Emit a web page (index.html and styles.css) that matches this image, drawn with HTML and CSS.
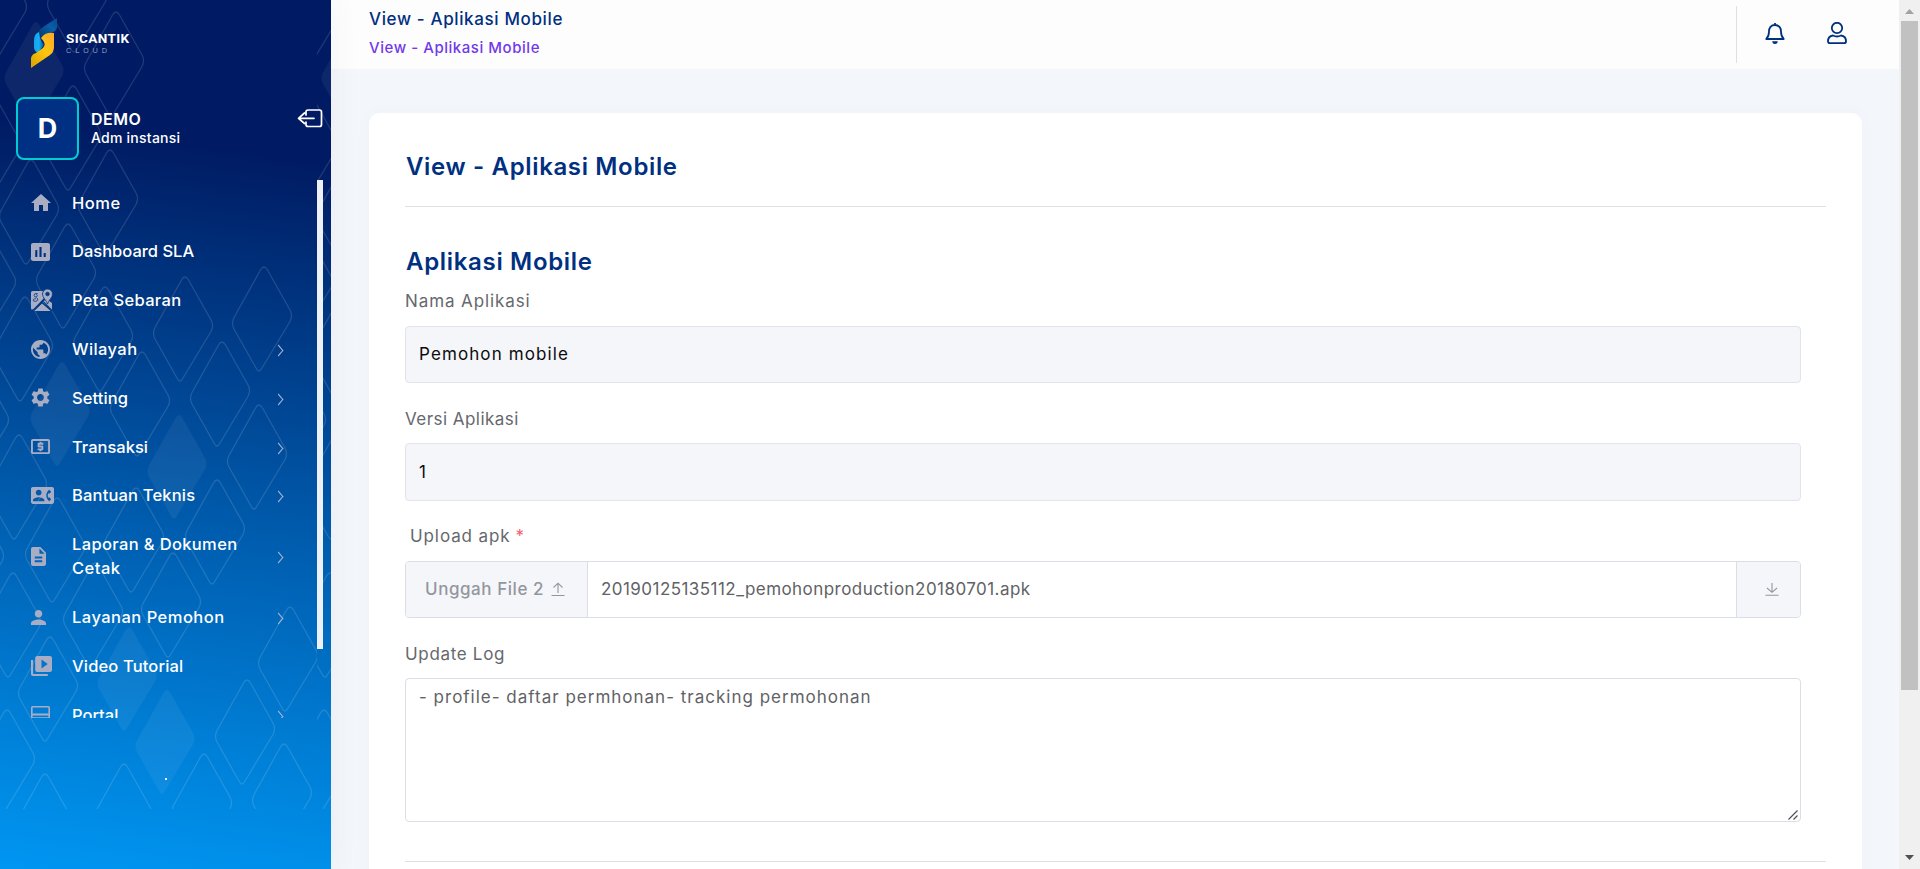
FILE: index.html
```html
<!DOCTYPE html>
<html lang="id">
<head>
<meta charset="utf-8">
<title>View - Aplikasi Mobile</title>
<link rel="stylesheet" href="styles.css">
</head>
<body>
<div class="app">
  <aside class="sidebar">
    <svg class="pattern" width="331" height="809" viewBox="0 0 331 809">
      <defs>
        <path id="d" d="M-1.500 -49Q2 -55 5.500 -49L28 -9Q31 -3.500 28 2.500L0 49Q-3 55 -6 49L-28 10Q-31 4 -28 -1.500Z"/>
        <g id="tile">
          <g class="outline">
            <use href="#d" x="-3" y="10"/><use href="#d" x="77" y="0"/><use href="#d" x="114" y="64"/>
            <use href="#d" x="71" y="138"/><use href="#d" x="-9" y="148"/><use href="#d" x="108" y="202"/>
            <use href="#d" x="29" y="212"/><use href="#d" x="66" y="276"/><use href="#d" x="-14" y="285"/>
            <use href="#d" x="262" y="319"/><use href="#d" x="183" y="329"/><use href="#d" x="103" y="339"/>
            <use href="#d" x="23" y="349"/><use href="#d" x="220" y="394"/><use href="#d" x="140" y="404"/>
            <use href="#d" x="-21" y="423"/><use href="#d" x="257" y="457"/><use href="#d" x="17" y="487"/>
            <use href="#d" x="215" y="532"/><use href="#d" x="134" y="540"/><use href="#d" x="55" y="550"/>
            <use href="#d" x="-26" y="559"/><use href="#d" x="171" y="605"/><use href="#d" x="93" y="615"/>
            <use href="#d" x="11" y="625"/><use href="#d" x="288" y="659"/><use href="#d" x="48" y="689"/>
            <use href="#d" x="245" y="732"/><use href="#d" x="5" y="762"/><use href="#d" x="282" y="796"/>
            <use href="#d" x="202" y="806"/><use href="#d" x="122" y="816"/><use href="#d" x="43" y="826"/>
          </g>
          <g class="solid">
            <use href="#d" x="34" y="74"/><use href="#d" x="60" y="414"/><use href="#d" x="177" y="467"/>
            <use href="#d" x="127" y="679"/><use href="#d" x="165" y="742"/>
          </g>
        </g>
        <clipPath id="c1"><path d="M0 0h317v809H0z"/></clipPath>
        <clipPath id="c2"><path d="M317 0h14v809h-14z"/></clipPath>
      </defs>
      <g clip-path="url(#c1)"><use href="#tile"/></g>
      <g clip-path="url(#c2)"><use href="#tile" x="317"/></g>
    </svg>

    <div class="brand">
      <svg width="28" height="50" viewBox="0 0 28 50">
        <defs>
          <linearGradient id="g1" x1="0" y1="1" x2="1" y2="0"><stop offset="0" stop-color="#04396f"/><stop offset=".6" stop-color="#0a5ea8"/><stop offset="1" stop-color="#034a8c"/></linearGradient>
          <linearGradient id="g2"><stop offset="0" stop-color="#12a5ee"/><stop offset=".5" stop-color="#18aef5"/><stop offset="1" stop-color="#064d8c"/></linearGradient>
          <linearGradient id="g3" x1="1" y1="0" x2="0" y2="1"><stop offset="0" stop-color="#fba52c"/><stop offset=".45" stop-color="#fcc70f"/><stop offset="1" stop-color="#dca200"/></linearGradient>
        </defs>
        <path d="M27 0v10Q26 14 20 15L9 19Q6 14 13 9Z" fill="url(#g1)"/>
        <path d="M9 14Q4 16 4 22v7Q4 33 8 35L14 27Q10 23 9 14Z" fill="url(#g2)"/>
        <path d="M11 20Q15 14 24 15V29Q24 34 20 37L1 50V40Q2 36 6 35L13 30Q17 26 11 20Z" fill="url(#g3)"/>
      </svg>
      <div class="brand-text"><div class="brand-name">SICANTIK</div><div class="brand-sub">CLOUD</div></div>
    </div>

    <div class="profile">
      <div class="avatar">D</div>
      <div class="who"><div class="who-name">DEMO</div><div class="who-role">Adm instansi</div></div>
      <svg class="logout" width="26" height="20" viewBox="0 0 26 20"><path d="M9 6V3Q9 1 11 1H22.500Q24.500 1 24.500 3V15.500Q24.500 17.500 22.500 17.500H11Q9 17.500 9 15.500V13M17 9.300H2M7.500 4L1.500 9.300L7.500 14.500"/></svg>
    </div>

    <div class="nav-wrap">
      <nav class="nav">
        <div class="item home"><svg width="20" height="17" viewBox="2 3 20 17"><path d="M10 20v-6h4v6h5v-8h3L12 3 2 12h3v8z"/></svg><span>Home</span></div>
        <div class="item dash"><svg width="19" height="18" viewBox="3 3 18 18" preserveAspectRatio="none"><path d="M19 3H5c-1.100 0-2 .9-2 2v14c0 1.100.9 2 2 2h14c1.100 0 2-.9 2-2V5c0-1.100-.9-2-2-2zM9 17H7v-7h2v7zm4 0h-2V7h2v10zm4 0h-2v-4h2v4z"/></svg><span>Dashboard SLA</span></div>
        <div class="item peta"><svg width="22" height="22" viewBox="0 0 22 22"><path fill-rule="evenodd" d="M1.500 2H12Q11 5.500 13 9L3.500 19Q0 22 0 19V3.500Q0 2 1.500 2Z"/><path d="M12 13L20 21.500Q19 22 18 22H4Q3 22 2.500 21.500L10.500 14.500Z"/><path d="M12.500 12L16 10.500L21 14V19Q21 20.500 20.500 20Z"/><path class="cut" d="M11 13.500L0 24M11 13.500L22 23"/><path class="halo" fill-rule="evenodd" d="M16.500 0a5 5 0 0 1 5 5c0 4-4 6-5 10c-1-4-5-6-5-10a5 5 0 0 1 5-5zm0 3.200a1.800 1.800 0 1 0 0 3.600a1.800 1.800 0 1 0 0-3.600z"/><path class="thin" d="M6.500 4.500Q3 4 3 6.500Q3.500 8.500 5.500 8Q7 6.500 5.500 5M5.500 8.500Q7.500 10 6.500 11.500Q5 13 2.500 12Q1.500 9.500 5 9.800"/></svg><span>Peta Sebaran</span></div>
        <div class="item wil"><svg width="19" height="19" viewBox="2 2 20 20"><path d="M12 2C6.480 2 2 6.480 2 12s4.480 10 10 10 10-4.480 10-10S17.520 2 12 2zm-1 17.930c-3.950-.49-7-3.850-7-7.930 0-.62.080-1.210.210-1.790L9 15v1c0 1.100.9 2 2 2v1.930zm6.900-2.540c-.26-.81-1-1.390-1.900-1.390h-1v-3c0-.55-.45-1-1-1H8v-2h2c.55 0 1-.45 1-1V7h2c1.100 0 2-.9 2-2v-.41c2.930 1.190 5 4.060 5 7.410 0 2.080-.8 3.970-2.100 5.390z"/></svg><span>Wilayah</span><i class="chev"></i></div>
        <div class="item set"><svg width="19" height="19" viewBox="2.200 2 19.600 20"><path d="M19.140 12.940c.04-.3.060-.61.060-.94 0-.32-.02-.64-.07-.94l2.030-1.580c.18-.14.23-.41.12-.61l-1.920-3.320c-.12-.22-.37-.29-.59-.22l-2.390.96c-.5-.38-1.030-.7-1.620-.94l-.36-2.540c-.04-.24-.24-.41-.48-.41h-3.840c-.24 0-.43.17-.47.41l-.36 2.540c-.59.24-1.130.57-1.620.94l-2.390-.96c-.22-.08-.47 0-.59.22L2.740 8.870c-.12.210-.08.470.12.610l2.030 1.580c-.05.3-.09.63-.09.94s.02.640.070.940l-2.030 1.580c-.18.140-.23.410-.12.610l1.920 3.320c.12.220.37.290.59.220l2.390-.96c.5.380 1.030.7 1.620.94l.36 2.540c.05.240.24.410.48.410h3.840c.24 0 .44-.17.47-.41l.36-2.540c.59-.24 1.130-.56 1.620-.94l2.390.96c.22.080.47 0 .59-.22l1.920-3.320c.12-.22.070-.47-.12-.61l-2.010-1.580zM12 15.600c-1.980 0-3.600-1.620-3.600-3.600s1.620-3.600 3.600-3.600 3.600 1.620 3.600 3.600-1.620 3.600-3.600 3.600z"/></svg><span>Setting</span><i class="chev"></i></div>
        <div class="item trans"><svg width="19" height="15" viewBox="2 4 20 16" preserveAspectRatio="none"><path d="M11 17h2v-1h1c.55 0 1-.45 1-1v-3c0-.55-.45-1-1-1h-3v-1h4V8h-2V7h-2v1h-1c-.55 0-1 .45-1 1v3c0 .55.45 1 1 1h3v1H9v2h2v1zm9-13H4c-1.110 0-1.990.89-1.990 2L2 18c0 1.110.89 2 2 2h16c1.110 0 2-.89 2-2V6c0-1.110-.89-2-2-2zm0 14H4V6h16v12z"/></svg><span>Transaksi</span><i class="chev"></i></div>
        <div class="item bant"><svg width="23" height="17" viewBox="0 3 24 18" preserveAspectRatio="none"><path d="M22 3H2C.9 3 0 3.900 0 5v14c0 1.100.9 2 2 2h20c1.100 0 1.990-.9 1.990-2L24 5c0-1.100-.9-2-2-2zM8 6c1.660 0 3 1.340 3 3s-1.340 3-3 3-3-1.340-3-3 1.340-3 3-3zm6 12H2v-1c0-2 4-3.100 6-3.100s6 1.100 6 3.100v1zm3.850-4h1.640L21 16l-1.990 1.990c-1.310-.98-2.280-2.380-2.730-3.990-.18-.64-.28-1.310-.28-2s.1-1.360.28-2c.45-1.620 1.420-3.010 2.730-3.990L21 8l-1.510 2h-1.640c-.22.630-.35 1.300-.35 2s.13 1.370.35 2z"/></svg><span>Bantuan Teknis</span><i class="chev"></i></div>
        <div class="item lap"><svg width="15" height="19" viewBox="4 2 16 20" preserveAspectRatio="none"><path d="M14 2H6c-1.100 0-1.990.9-1.990 2L4 20c0 1.100.89 2 1.990 2H18c1.100 0 2-.9 2-2V8l-6-6zm2 16H8v-2h8v2zm0-4H8v-2h8v2zm-3-5V3.500L18.500 9H13z"/></svg><span>Laporan &amp; Dokumen<br><b>Cetak</b></span><i class="chev"></i></div>
        <div class="item lay"><svg width="15" height="15" viewBox="4 4 16 16"><path d="M12 12c2.210 0 4-1.790 4-4s-1.790-4-4-4-4 1.790-4 4 1.790 4 4 4zm0 2c-2.670 0-8 1.340-8 4v2h16v-2c0-2.660-5.330-4-8-4z"/></svg><span>Layanan Pemohon</span><i class="chev"></i></div>
        <div class="item vid"><svg width="21" height="20" viewBox="2 2 20 20" preserveAspectRatio="none"><path d="M4 6H2v14c0 1.100.9 2 2 2h14v-2H4V6zm16-4H8c-1.100 0-2 .9-2 2v12c0 1.100.9 2 2 2h12c1.100 0 2-.9 2-2V4c0-1.100-.9-2-2-2zm-8 12.500v-9l6 4.500-6 4.500z"/></svg><span>Video Tutorial</span></div>
        <div class="item port"><svg width="19" height="15" viewBox="0 0 19 15"><path fill-rule="evenodd" d="M1.500 0H17.500Q19 0 19 1.500V13.500Q19 15 17.500 15H1.500Q0 15 0 13.500V1.500Q0 0 1.500 0ZM1.600 1.600V7.500H17.400V1.600ZM1.600 9.600V11.200H17.400V9.600Z"/></svg><span>Portal</span><i class="chev"></i></div>
      </nav>
      <div class="nav-thumb"></div>
    </div>
    <div class="foot"><i class="dot"></i></div>
  </aside>

  <main class="main">
    <header class="topbar">
      <div class="crumbs"><div class="page">View - Aplikasi Mobile</div><div class="sub">View - Aplikasi Mobile</div></div>
      <div class="tools">
        <svg width="20" height="23" viewBox="0 0 20 23"><path d="M10 1V3M10 3C6 3 4 6 4 9.500C4 13 3.300 15 1.300 17H18.700C16.700 15 16 13 16 9.500C16 6 14 3 10 3Z"/><path class="fill" d="M7.300 19.300h5.400a2.700 2.700 0 0 1-5.400 0z"/></svg>
        <svg width="20" height="23" viewBox="0 0 20 23"><circle cx="10" cy="6" r="5.200"/><path d="M6 13.500Q10 15.500 14 13.500Q19 14 19 19.500Q19 21.200 17 21.200H3Q1 21.200 1 19.500Q1 14 6 13.500Z"/></svg>
      </div>
    </header>
    <section class="card">
      <h1 class="title">View - Aplikasi Mobile</h1>
      <div class="form">
        <h2 class="group">Aplikasi Mobile</h2>
        <label class="label l-nama">Nama Aplikasi</label>
        <div class="input f-nama">Pemohon mobile</div>
        <label class="label l-versi">Versi Aplikasi</label>
        <div class="input f-versi">1</div>
        <label class="label l-upload">Upload apk<span class="req">*</span></label>
        <div class="upload">
          <div class="pick"><span>Unggah File 2</span><svg width="14" height="15" viewBox="0 0 14 15"><path d="M7 11V1.500M2.500 5.500L7 1.200L11.500 5.500M.5 13.500H13.500"/></svg></div>
          <div class="file">20190125135112_pemohonproduction20180701.apk</div>
          <div class="get"><svg width="14" height="15" viewBox="0 0 14 15"><path d="M7 1V10M2 6L7 10.300L12 6M.5 13.300H13.500"/></svg></div>
        </div>
        <label class="label l-log">Update Log</label>
        <div class="area"><span>- profile- daftar permhonan- tracking permohonan</span><svg width="10" height="10" viewBox="0 0 10 10"><path d="M.5 9.500L9.500 .5M5.500 9.500L9.500 5.500"/></svg></div>
      </div>
    </section>
  </main>

  <div class="scroll">
    <svg width="9" height="5" viewBox="0 0 9 5"><path fill="#a3a3a3" d="M4.500 0L9 5H0z"/></svg>
    <div class="thumb"></div>
    <svg class="down" width="9" height="5" viewBox="0 0 9 5"><path fill="#505050" d="M0 0H9L4.500 5z"/></svg>
  </div>
</div>
</body>
</html>
```
FILE: styles.css
```css
* { box-sizing: border-box; }
body { margin: 0; overflow: hidden; font-family: Inter, sans-serif; }
svg, i { display: block; flex: none; }
.app { display: flex; height: 869px; overflow: hidden; background: #f3f6fa; }

.sidebar {
  position: relative; flex: none; width: 331px; display: flex; flex-direction: column; color: #fff; z-index: 1;
  background: linear-gradient(188deg, #001b63 0%, #001b63 18%, #002d77 29%, #0058a9 57%, #007dd4 82%, #0096f2 100%);
  box-shadow: 0 0 28px rgba(82, 63, 105, .06);
}
.pattern { position: absolute; left: 0; top: 0; }
.outline { fill: none; stroke: #fff; stroke-opacity: .13; stroke-width: 1.3; }
.solid { fill: #fff; fill-opacity: .055; }

.brand { position: relative; display: flex; gap: 8px; height: 97px; padding: 18px 0 0 30px; }
.brand-text { padding-top: 12px; }
.brand-name { font: 700 13.5px/16px Roboto, sans-serif; letter-spacing: .4px; }
.brand-sub { font: 300 8px/9px Roboto, sans-serif; letter-spacing: 4px; color: #b9c1dc; }

.profile { position: relative; display: flex; height: 82px; padding-left: 16px; }
.avatar { flex: none; width: 63px; height: 63px; border: 2px solid #00ccd2; border-radius: 8px; background: #003083; font-weight: 700; font-size: 27px; line-height: 59px; text-align: center; }
.who { flex: none; width: 218px; padding: 11px 0 0 12px; }
.who-name { font-weight: 600; font-size: 16px; line-height: 22px; letter-spacing: .5px; }
.who-role { font-weight: 500; font-size: 14px; line-height: 16px; letter-spacing: .24px; }
.logout { margin-top: 12px; fill: none; stroke: #fff; stroke-width: 1.700; stroke-linejoin: round; stroke-linecap: round; }

.nav-wrap { position: relative; display: flex; height: 539px; overflow: hidden; }
.nav { width: 317px; margin-top: -.6px; }
.item { display: grid; grid-template-columns: 41px 205px 6px; align-items: center; padding: 12.200px 0 12.200px 31px; font-size: 16.500px; font-weight: 500; line-height: 24.400px; }
.item svg { fill: #a9adc4; }
.item b { font-weight: 500; letter-spacing: .5px; }
.chev { width: 7px; height: 7px; margin-left: -2px; margin-top: 3px; border: solid #a9b4d0; border-width: 1.500px 1.500px 0 0; transform: scaleY(1.200) rotate(45deg); }
.cut { fill: none; stroke: #003985; stroke-width: 1.500; }
.thin { fill: none; stroke: #224b90; stroke-width: 1; }
.halo { stroke: #003985; stroke-width: .8; }
.home { letter-spacing: .5px; }
.dash { letter-spacing: 0; }
.peta { letter-spacing: .35px; }
.wil { letter-spacing: .4px; }
.set { letter-spacing: .1px; }
.trans { letter-spacing: 0; }
.bant { letter-spacing: .18px; }
.lap { letter-spacing: .36px; }
.lay { letter-spacing: .48px; }
.vid { letter-spacing: .14px; }
.port { letter-spacing: 0; }
.port svg { margin-top: -4px; }
.nav-thumb { width: 6px; height: 469px; margin-top: 1px; background: #edf0f5; }
.foot { display: flex; justify-content: center; padding-top: 60px; }
.dot { width: 2px; height: 2px; background: #fff; }

.main { flex: 1; display: flex; flex-direction: column; min-width: 0; }
.topbar { flex: none; display: flex; justify-content: space-between; height: 69px; padding: 6px 52px 6px 38px; background: #fdfdfe; }
.page { font-size: 17px; font-weight: 450; line-height: 26px; letter-spacing: .63px; color: #00307f; }
.sub { font-size: 15px; font-weight: 450; line-height: 28px; letter-spacing: .55px; color: #7239ea; padding-top: 2px; }
.tools { display: flex; gap: 42px; padding: 16px 0 0 28px; border-left: 1px solid #dfe0e4; }
.tools svg { fill: none; stroke: #00307f; stroke-width: 1.800; stroke-linejoin: round; }
.tools .fill { fill: #00307f; stroke: none; }

.card { flex: none; width: 1493px; height: 800px; margin: 44px 0 0 38px; padding: 0 36px; border-radius: 11px; background: #fff; box-shadow: 0 0 20px rgba(56, 71, 109, .025); }
.title, .group { margin: 0; padding-left: 1px; font-weight: 600; font-size: 24px; color: #00307f; }
.title { height: 94px; padding-top: 36px; line-height: 36px; letter-spacing: .65px; border-bottom: 1px solid #dfe0e4; }
.form { height: 655px; padding: 37px 25px 0 0; border-bottom: 1px solid #dfe0e4; }
.group { line-height: 36px; letter-spacing: .68px; }
.label { display: block; height: 26px; font-size: 17px; line-height: 26px; color: #65686d; }
.l-nama { margin: 8px 0 12px; letter-spacing: .9px; }
.l-versi { margin: 23px 0 11px; letter-spacing: .46px; }
.l-upload { margin: 22px 0 12px; padding-left: 5px; letter-spacing: .9px; }
.l-log { margin: 23px 0 11px; letter-spacing: .68px; }
.req { margin-left: 5px; color: #f4606c; }
.input { height: 57px; padding: 0 13px; border: 1px solid #e1e3ed; border-radius: 4px; background: #f5f6fa; color: #0b0b0d; font-size: 17px; line-height: 55px; }
.f-nama { letter-spacing: 1.110px; }
.f-versi { height: 58px; line-height: 56px; }
.upload { display: flex; height: 57px; border: 1px solid #dbdde7; border-radius: 4px; font-size: 17px; line-height: 55px; color: #5f6266; }
.pick { display: flex; align-items: center; gap: 7px; width: 182px; padding-left: 19px; background: #f5f6fa; border-right: 1px solid #dbdde7; border-radius: 3px 0 0 3px; color: #93969e; font-weight: 500; letter-spacing: .55px; }
.pick svg, .get svg { fill: none; stroke: #93969e; stroke-width: 1.100; }
.file { flex: 1; padding-left: 13px; letter-spacing: .45px; }
.get { display: flex; align-items: center; justify-content: center; width: 64px; padding-left: 6px; background: #f5f6fa; border-left: 1px solid #dbdde7; border-radius: 0 3px 3px 0; }
.area { display: flex; justify-content: space-between; align-items: flex-start; height: 144px; padding: 5px 2px 1px 13px; border: 1px solid #dbdde7; border-radius: 4px; color: #5f6266; font-size: 17px; line-height: 26px; letter-spacing: 1px; }
.area svg { align-self: flex-end; fill: none; stroke: #4d4d52; stroke-width: 1.200; }

.scroll { flex: none; width: 21px; display: flex; flex-direction: column; align-items: center; padding: 9px 0; background: #f0f0f0; }
.thumb { width: 17px; height: 669px; margin-top: 7px; background: #c1c1c1; }
.down { margin-top: auto; }
```
